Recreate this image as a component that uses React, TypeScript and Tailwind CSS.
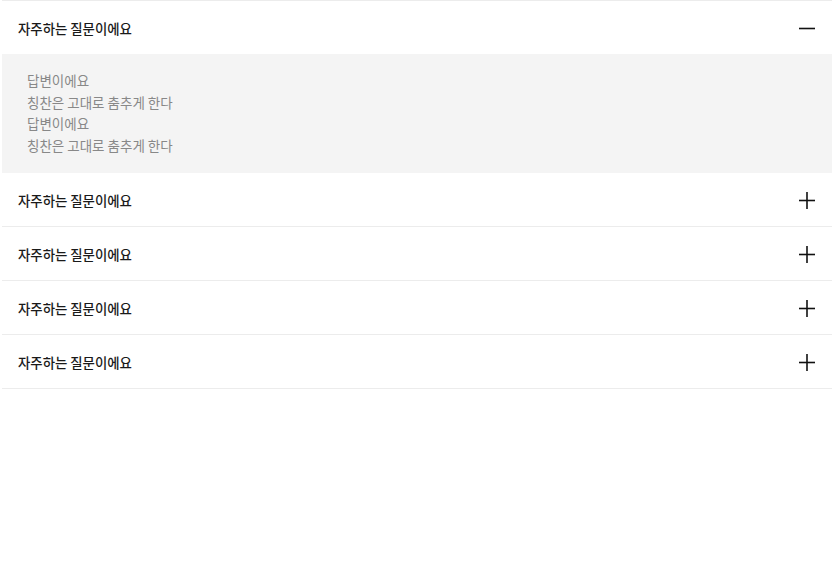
import React, { useState } from 'react';

const FAQS = [
  { q: '자주하는 질문이에요', a: ['답변이에요', '칭찬은 고대로 춤추게 한다', '답변이에요', '칭찬은 고대로 춤추게 한다'] },
  { q: '자주하는 질문이에요', a: ['답변이에요', '칭찬은 고대로 춤추게 한다'] },
  { q: '자주하는 질문이에요', a: ['답변이에요', '칭찬은 고대로 춤추게 한다'] },
  { q: '자주하는 질문이에요', a: ['답변이에요', '칭찬은 고대로 춤추게 한다'] },
  { q: '자주하는 질문이에요', a: ['답변이에요', '칭찬은 고대로 춤추게 한다'] },
];

function ToggleIcon({ open }: { open: boolean }) {
  return (
    <svg width="18" height="18" viewBox="0 0 18 18" className="shrink-0">
      <path d="M1 9.5h16" stroke="#111" strokeWidth="1.6" />
      {!open && <path d="M9 1v17" stroke="#111" strokeWidth="1.6" />}
    </svg>
  );
}

export default function App() {
  // 첫 번째 항목만 펼쳐진 상태로 시작
  const [openIdx, setOpenIdx] = useState<number | null>(0);

  return (
    <div
      className="w-full min-h-[564px] bg-white pl-[2px] pr-[3px]"
      style={{ fontFamily: '"Noto Sans CJK KR", "Noto Sans", sans-serif' }}
    >
      <ul className="border-t border-[#ececec]">
        {FAQS.map((item, i) => {
          const open = openIdx === i;
          return (
            <li key={i} className="border-b border-[#ececec]">
              <button
                onClick={() => setOpenIdx(open ? null : i)}
                className="w-full h-[53px] flex items-center justify-between pl-4 pr-[16px] pt-px cursor-pointer"
              >
                <span className="text-[13.4px] font-medium text-[#1a1a1a]">{item.q}</span>
                <ToggleIcon open={open} />
              </button>
              {open && (
                <div className="bg-[#f4f4f4] px-[25px] pt-4 pb-[17px] text-[13.5px] leading-[21.5px] text-[#888] -mb-px">
                  {item.a.map((line, j) => (
                    <p key={j}>{line}</p>
                  ))}
                </div>
              )}
            </li>
          );
        })}
      </ul>
    </div>
  );
}
